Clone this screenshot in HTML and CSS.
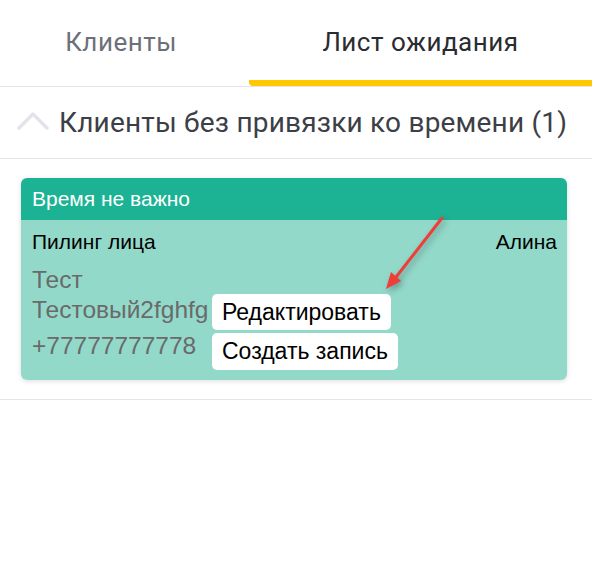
FILE: index.html
```html
<!DOCTYPE html>
<html lang="ru">
<head>
<meta charset="utf-8">
<title>Лист ожидания</title>
<link rel="stylesheet" href="styles.css">
</head>
<body>
<div class="page">
  <nav class="tabs">
    <div class="tab tab-first">Клиенты</div>
    <div class="tab tab-active">Лист ожидания</div>
  </nav>
  <div class="section-head">
    <svg class="chevron" width="40" height="26" viewBox="0 0 40 26"><polyline points="3,20 17,6 31,20" fill="none" stroke="#e3e3ec" stroke-width="3.5" stroke-linecap="round" stroke-linejoin="round"/></svg>
    <span class="section-title">Клиенты без привязки ко времени (1)</span>
  </div>
  <div class="list">
    <div class="card">
      <div class="card-head">Время не важно</div>
      <div class="card-body">
        <div class="row">
          <span>Пилинг лица</span>
          <span>Алина</span>
        </div>
        <div class="client">
          <div class="name">Тест</div>
          <div class="name">Тестовый2fghfg</div>
          <div class="phone">+77777777778</div>
        </div>
        <div class="menu">
          <div class="menu-item">Редактировать</div>
          <div class="menu-item">Создать запись</div>
        </div>
      </div>
    </div>
  </div>
  <svg class="arrow" width="592" height="587" viewBox="0 0 592 587">
    <g class="arrow-g">
      <line x1="442" y1="218" x2="393" y2="281" stroke="#ef3d38" stroke-width="3" stroke-linecap="round"/>
      <polygon points="386,289 401,281 391,272" fill="#ef3d38"/>
    </g>
  </svg>
</div>
</body>
</html>
```
FILE: styles.css
```css
html, body {
  margin: 0;
  padding: 0;
  background: #ffffff;
}
.page {
  position: relative;
  width: 592px;
  min-height: 587px;
  font-family: Roboto, "Noto Sans", sans-serif;
}
.tabs {
  display: flex;
  height: 86px;
  border-bottom: 1px solid #e4e4ec;
}
.tab {
  box-sizing: border-box;
  font-size: 26px;
  letter-spacing: 0.5px;
  line-height: 30px;
  padding-top: 27px;
  text-align: center;
}
.tab-first {
  width: 249px;
  color: #6d7079;
  padding-right: 7px;
}
.tab-active {
  flex: 1;
  color: #2a2c30;
  border-bottom: 6px solid #ffc800;
  border-bottom-left-radius: 4px;
}
.section-head {
  display: flex;
  align-items: center;
  height: 72px;
  border-bottom: 1px solid #e4e4ec;
  padding-left: 16px;
  box-sizing: border-box;
}
.chevron {
  display: block;
  margin-top: -3px;
}
.section-title {
  font-size: 28px;
  letter-spacing: 0.2px;
  line-height: 34px;
  color: #3c4046;
  margin-left: 3px;
}
.list {
  padding: 19px 25px 19px 21px;
  border-bottom: 1px solid #e4e4ec;
}
.card {
  border-radius: 6px;
  overflow: hidden;
  box-shadow: 0 1px 5px rgba(0, 0, 0, 0.14);
  font-family: "Liberation Sans", Arial, sans-serif;
}
.card-head {
  height: 42px;
  display: flex;
  align-items: center;
  padding: 0 11px;
  background: #1bb394;
  color: #ffffff;
  font-size: 21px;
}
.card-body {
  position: relative;
  background: #93d9ca;
  padding: 10px 10px 19px 11px;
}
.row {
  display: flex;
  justify-content: space-between;
  font-size: 21px;
  line-height: 24px;
  color: #000000;
}
.client {
  margin-top: 11px;
  color: #6a6a6a;
  font-size: 24.5px;
  line-height: 30px;
}
.phone {
  margin-top: 6px;
}
.menu {
  position: absolute;
  left: 191px;
  top: 74px;
  display: flex;
  flex-direction: column;
  align-items: flex-start;
  gap: 3px;
}
.menu-item {
  background: #ffffff;
  border-radius: 5px;
  padding: 0 10px;
  height: 36px;
  line-height: 37px;
  font-size: 23px;
  color: #000000;
}
.menu-item + .menu-item {
  height: 37px;
}
.arrow {
  position: absolute;
  left: 0;
  top: 0;
  pointer-events: none;
}
.arrow-g {
  filter: drop-shadow(2px 3px 3px rgba(0, 0, 0, 0.3));
}
```
